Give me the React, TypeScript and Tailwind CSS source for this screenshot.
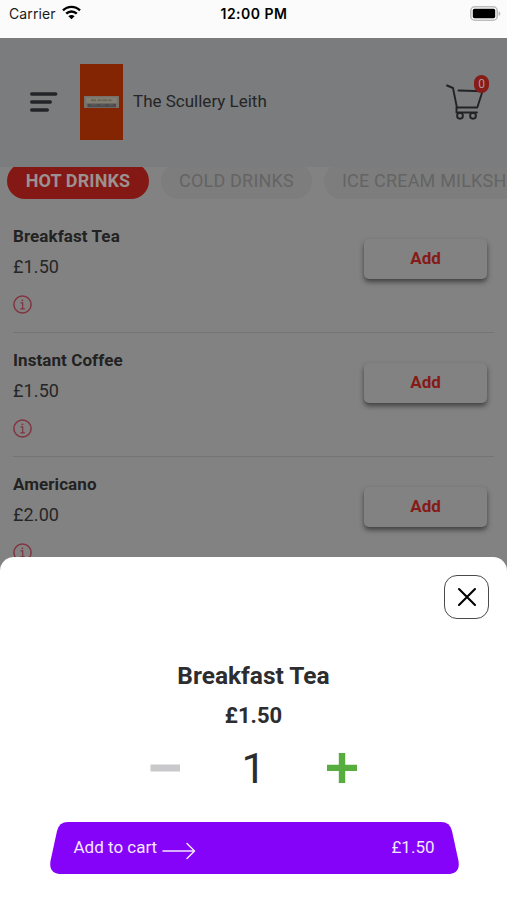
import React, { useState } from "react";

interface MenuItem {
  name: string;
  price: number;
}

const CATEGORIES = ["HOT DRINKS", "COLD DRINKS", "ICE CREAM MILKSHAKES"];

const ITEMS: MenuItem[] = [
  { name: "Breakfast Tea", price: 1.5 },
  { name: "Instant Coffee", price: 1.5 },
  { name: "Americano", price: 2 },
];

const formatPrice = (value: number) => `£${value.toFixed(2)}`;

function StatusBar() {
  return (
    <div className="grid h-[38px] shrink-0 grid-cols-3 items-start bg-[#fbfbfb] pt-[4px] pr-[6px] pl-[9px] font-['Inter',sans-serif] text-[14px] leading-[20px] text-[#1a1a1a]">
      <div className="flex items-center gap-[6px]">
        <span className="tracking-[0.1px]">Carrier</span>
        <svg width="19" height="15" viewBox="0 0 19 15" fill="none" stroke="#000" strokeWidth="2.4" className="-mt-[3px]">
          <path d="M1 5.4C5.8.7 13.2.7 18 5.4" />
          <path d="M4.2 8.7c3-2.9 7.6-2.9 10.6 0" />
          <path d="M9.5 14.2 6.4 11.2c1.8-1.6 4.4-1.6 6.2 0z" fill="#000" stroke="none" />
        </svg>
      </div>
      <span className="-ml-[2px] text-center text-[14px] font-semibold tracking-[0.5px] whitespace-nowrap text-black">12:00 PM</span>
      <svg width="31" height="15" viewBox="0 0 31 15" className="mt-[2px] justify-self-end">
        <rect x="0.8" y="0.8" width="26.4" height="13.4" rx="4" fill="#fff" stroke="#bdbdbd" strokeWidth="1.6" />
        <rect x="2.8" y="2.8" width="22.4" height="9.4" rx="1.6" fill="#000" />
        <path d="M28.6 5.2c2.2.8 2.2 3.8 0 4.6z" fill="#b5b5b5" />
      </svg>
    </div>
  );
}

function Header({ count }: { count: number }) {
  return (
    <header className="flex h-[129px] shrink-0 items-center bg-[#7a7c7e] pr-[17px] pb-[2px] pl-[30px]">
      <button aria-label="Menu">
        <svg width="28" height="22" viewBox="0 0 28 22" stroke="#232428" strokeWidth="3.4" strokeLinecap="round">
          <path d="M1.7 3h24M1.7 11h18.6M1.7 19h15.6" />
        </svg>
      </button>
      <svg width="43" height="76" viewBox="0 0 43 76" className="ml-[22px]">
        <rect width="43" height="76" fill="#832502" />
        <rect x="4" y="32" width="35" height="12" fill="#777169" />
        <rect x="6" y="33.5" width="31" height="5.5" fill="#837e73" />
        <path d="M11 36.2h5m1.5 0h4m1 0h5m1 0h3" stroke="#6c6657" strokeWidth="2" />
        <path d="M7.5 41.5h28.5" stroke="#4c4c50" strokeWidth="3.5" />
        <path d="M11 41h6m3 0h5m4 0h4" stroke="#62615f" strokeWidth="1" />
      </svg>
      <h1 className="ml-[10px] pb-[1px] text-[17px] leading-6 text-[#252525]">The Scullery Leith</h1>
      <button aria-label="Cart" className="relative ml-auto flex h-12 w-[44px]">
        <svg width="40" height="38" viewBox="0 0 40 38" fill="none" stroke="#232327" strokeWidth="1.9" strokeLinecap="round" strokeLinejoin="round" className="mt-[6px]">
          <path d="M1 1.500 7 4l4 20M12.500 6.500l24 .7-5.200 16.300H10.800" />
          <path d="M10.500 23.500v5H31" />
          <circle cx="14" cy="31.800" r="2.900" />
          <circle cx="27" cy="31.800" r="2.900" />
        </svg>
        <span className="absolute top-[-3px] left-[28px] flex h-[18px] w-[15px] items-center justify-center rounded-full bg-[#861b17] text-[12px] leading-none text-[#aa9a98]">
          {count}
        </span>
      </button>
    </header>
  );
}

function CategoryTabs() {
  return (
    <nav className="flex h-[32px] shrink-0 items-end gap-[12px] overflow-hidden pl-[7px]">
      {CATEGORIES.map((category, i) => (
        <button
          key={category}
          className={
            i === 0
              ? "flex h-[36px] w-[142px] shrink-0 items-center justify-center rounded-full bg-[#841814] pb-[2px] text-[18px] font-bold tracking-[0.1px] text-[#9b9190]"
              : "flex h-[36px] shrink-0 items-center rounded-full bg-[#7d7d7d] px-[18px] pb-[2px] text-[18px] tracking-[0.200px] whitespace-nowrap text-[#646464]"
          }
        >
          {category}
        </button>
      ))}
    </nav>
  );
}

function MenuRow({ item }: { item: MenuItem }) {
  return (
    <li className="flex h-[124px] shrink-0 items-start justify-between border-b border-[#747474]">
      <div className="pt-[15px]">
        <h2 className="text-[17px] leading-[24px] font-bold tracking-[0.08px] text-[#222]">{item.name}</h2>
        <p className="mt-[7px] text-[18px] leading-[24px] tracking-[0.1px] text-[#262626]">{formatPrice(item.price)}</p>
        <svg width="19" height="19" viewBox="0 0 19 19" fill="none" stroke="#81333f" strokeWidth="1.5" className="mt-[16px]">
          <circle cx="9.5" cy="9.5" r="8.6" />
          <path d="M7.5 7.9h2.2v5.7M7.3 13.8h4.6" strokeWidth="1.2" />
          <circle cx="9.4" cy="5.3" r=".9" fill="#81333f" stroke="none" />
        </svg>
      </div>
      <button className="mt-[30px] mr-[7px] h-[40px] w-[123px] rounded-[5px] bg-[#828282] text-[17px] font-bold text-[#851a17] shadow-[0_3px_5px_rgba(0,0,0,0.5)]">
        Add
      </button>
    </li>
  );
}

function AddToCartSheet({ item }: { item: MenuItem }) {
  const [quantity, setQuantity] = useState(1);

  return (
    <section className="absolute inset-x-0 bottom-0 flex h-[343px] flex-col items-center rounded-t-[14px] bg-white text-[#2d2d2f]">
      <button
        aria-label="Close"
        className="mt-[18px] mr-[18px] flex h-[44px] w-[45px] shrink-0 items-center justify-center self-end rounded-[13px] border-[1.5px] border-[#4a4a4a]"
      >
        <svg width="20" height="20" viewBox="0 0 20 20" stroke="#000" strokeWidth="2.1" strokeLinecap="round">
          <path d="m2 2 16 16M18 2 2 18" />
        </svg>
      </button>
      <h2 className="mt-[42px] text-[24.5px] leading-[30px] font-bold">{item.name}</h2>
      <p className="mt-[11px] text-[22px] leading-[28px] font-bold">{formatPrice(item.price)}</p>
      <div className="mt-[11px] flex h-[54px] w-[207px] items-center justify-between">
        <button aria-label="Remove one" onClick={() => setQuantity(Math.max(1, quantity - 1))}>
          <svg width="30" height="30" viewBox="0 0 30 30">
            <path d="M.5 11.500h30v7H.5z" fill="#c9c9cb" />
          </svg>
        </button>
        <span className="text-[43px] leading-none">{quantity}</span>
        <button aria-label="Add one" onClick={() => setQuantity(quantity + 1)}>
          <svg width="30" height="30" viewBox="0 0 30 30">
            <path d="M11.8 0h6.4v11.7H30v6.4H18.2V30h-6.4V18.1H0v-6.4h11.8z" fill="#57ae3e" />
          </svg>
        </button>
      </div>
      <button className="relative mt-[27px] ml-px flex h-[52px] w-[409px] items-center px-[24px] text-[17px] text-[#f3e6ff]">
        <svg width="409" height="52" viewBox="0 0 409 52" className="absolute inset-0">
          <path d="M18 0H391Q400 0 402 9L408.5 39Q410.5 52 397 52H12Q-1.5 52 .5 39L7 9Q9 0 18 0Z" fill="#8403f8" />
        </svg>
        <span className="relative">Add to cart</span>
        <svg width="34" height="18" viewBox="0 0 34 18" fill="none" stroke="#f3e6ff" strokeWidth="1.5" strokeLinecap="round" strokeLinejoin="round" className="relative mt-[6px] ml-[5px]">
          <path d="M1 9h31M25 1.5 32.5 9 25 16.5" />
        </svg>
        <span className="relative ml-auto">{formatPrice(item.price * quantity)}</span>
      </button>
    </section>
  );
}

export default function App() {
  return (
    <div className="relative flex h-[900px] w-[507px] flex-col overflow-hidden bg-[#828282] font-['Roboto',sans-serif]">
      <StatusBar />
      <Header count={0} />
      <CategoryTabs />
      <ul className="mt-[10px] flex flex-col pr-[13px] pl-[13px]">
        {ITEMS.map((item) => (
          <MenuRow key={item.name} item={item} />
        ))}
      </ul>
      <AddToCartSheet item={ITEMS[0]} />
    </div>
  );
}
